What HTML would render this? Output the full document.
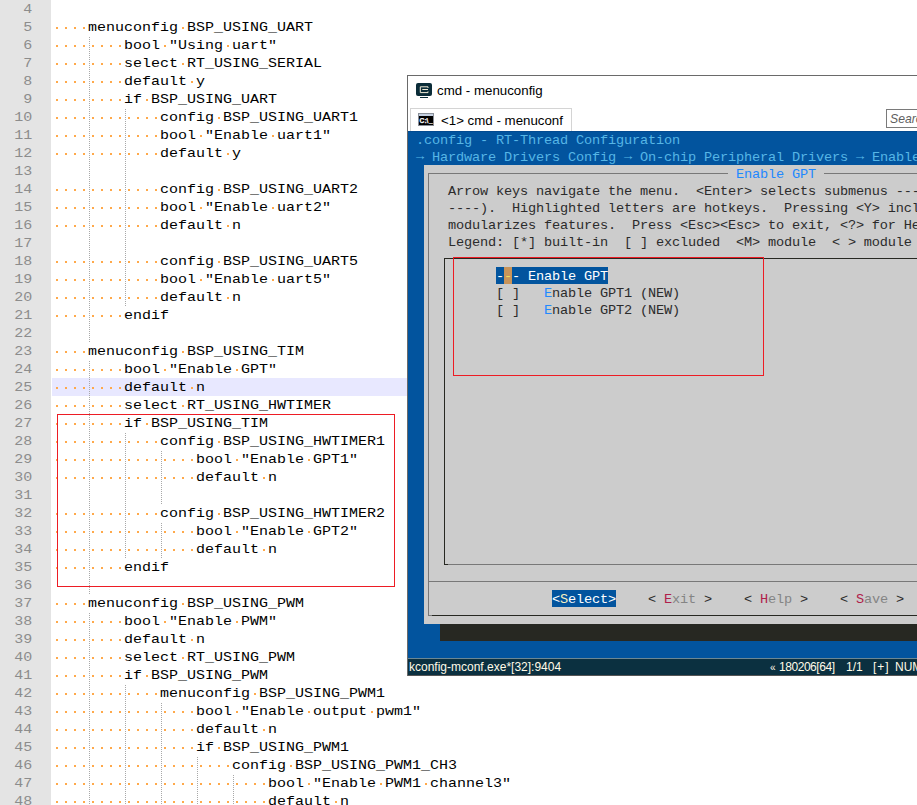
<!DOCTYPE html>
<html><head><meta charset="utf-8"><title>menuconfig</title>
<style>
html,body{margin:0;padding:0;background:#fff;overflow:hidden}
body{width:917px;height:805px;position:relative;overflow:hidden;font-family:"Liberation Sans",sans-serif}
#ed{position:absolute;left:0;top:0;width:917px;height:805px;overflow:hidden;background:#fff}
.gut{position:absolute;left:0;top:0;width:51px;height:805px;background:#e4e4e4}
.cur{position:absolute;left:52px;width:865px;height:18px;background:#e8e8ff}
.ln{position:absolute;left:0;width:28px;height:18px;margin:1px 0 0 0;text-align:right;color:#8c8c8c;font:13px/18px "Liberation Mono",monospace;transform:scaleX(1.1537);transform-origin:0 0}
.c{position:absolute;left:52px;margin:1px 0 0 0;height:18px;font:13px/18px "Liberation Mono",monospace;transform:scaleX(1.1537);transform-origin:0 0;color:#000;white-space:pre}
.d{position:absolute;width:2px;height:2px;background:#ffa94a}
.g{position:absolute;width:1px;height:18px;background:repeating-linear-gradient(to bottom,transparent 0,transparent 1px,#a8a8a8 1px,#a8a8a8 2px)}
.red{position:absolute;border:1px solid #ed1c24;box-sizing:content-box}
#win{position:absolute;left:0;top:0;width:917px;height:805px;overflow:hidden}
.winbg{position:absolute;left:407px;top:75px;width:520px;height:601px;background:#fff;border-left:1px solid #6a6a6a;border-top:1px solid #6a6a6a;box-sizing:border-box}
.ticon{position:absolute;left:416px;top:83px}
.ttext{position:absolute;left:437px;top:82px;font:13.3px/17px "Liberation Sans",sans-serif;color:#000;white-space:nowrap}
.tab{position:absolute;left:410px;top:108px;width:162px;height:23px;background:#fff;border:1px solid #d4d4d4;border-bottom:none;box-sizing:border-box}
.tabicon{position:absolute;left:418px;top:113px}
.tabtext{position:absolute;left:441px;top:112px;font:13.3px/17px "Liberation Sans",sans-serif;color:#000;white-space:nowrap}
.search{position:absolute;left:886px;top:109px;width:60px;height:19px;border:1px solid #7a7a7a;box-sizing:border-box;background:#fff}
.search span{position:absolute;left:3px;top:2px;font:italic 12.2px/15px "Liberation Sans",sans-serif;color:#606060}
.term{position:absolute;left:408px;top:131px;width:520px;height:527px;background:#02549e;border-top:1px solid #024a90;box-sizing:border-box}
.dlg{position:absolute;left:424px;top:165px;width:520px;height:459px;background:#cccccc}
.shadow{position:absolute;left:440px;top:624px;width:520px;height:17px;background:#272822}
.fr{position:absolute;box-sizing:border-box}
.outer{left:428px;top:173px;width:520px;height:443px;border-left:1px solid #787878;border-top:1px solid #787878;border-bottom:1px solid #787878}
.outerb{left:432px;top:615px;width:520px;height:1px;background:#272822}
.sep{left:428px;top:581px;width:520px;height:1px;background:#787878}
.inner{left:444px;top:258px;width:520px;height:307px;border-left:1px solid #272822;border-top:1px solid #272822;border-bottom:1px solid #272822}
.innerb{left:448px;top:564px;width:520px;height:1px;background:#787878}
.titlegap{position:absolute;left:728px;top:170px;width:96px;height:8px;background:#cccccc}
.t{position:absolute;margin:1px 0 0 0;height:17px;font:13.6px/17px "Liberation Mono",monospace;white-space:pre;letter-spacing:-0.16px}
.cy{color:#56b6e6}
.ttl{color:#1e88ff}
.ar{position:relative;top:-1px}
.dk{color:#2b2b2b}
.wh{color:#fff}
.hk{color:#2288ff}
.cc{color:#f0e060}
.sk{color:#f5f0c0}
.rk{color:#b0204a}
.gy{color:#848484}
.hl{position:absolute;height:17px;background:#02549e}
.cursor{position:absolute;width:8px;height:17px;background:#c8945a}
.status{position:absolute;left:408px;top:658px;width:520px;height:18px;background:#0b3040;border-top:1px solid #6a8794;border-bottom:1px solid #555;box-sizing:border-box;color:#fffbe8;font:12px/15px "Liberation Sans",sans-serif}
.status span{position:absolute;top:1px;white-space:nowrap}
</style></head>
<body>
<div id="ed">
<div class="gut"></div>
<div class="cur" style="top:378px"></div>
<div class="ln" style="top:0px">4</div>
<div class="ln" style="top:18px">5</div>
<i class="d" style="left:56px;top:27px"></i>
<i class="d" style="left:65px;top:27px"></i>
<i class="d" style="left:74px;top:27px"></i>
<i class="d" style="left:83px;top:27px"></i>
<i class="d" style="left:182px;top:27px"></i>
<pre class="c" style="top:18px">    menuconfig BSP_USING_UART</pre>
<div class="ln" style="top:36px">6</div>
<i class="d" style="left:56px;top:45px"></i>
<i class="d" style="left:65px;top:45px"></i>
<i class="d" style="left:74px;top:45px"></i>
<i class="d" style="left:83px;top:45px"></i>
<i class="d" style="left:92px;top:45px"></i>
<i class="d" style="left:101px;top:45px"></i>
<i class="d" style="left:110px;top:45px"></i>
<i class="d" style="left:119px;top:45px"></i>
<i class="d" style="left:164px;top:45px"></i>
<i class="d" style="left:227px;top:45px"></i>
<i class="g" style="left:89px;top:36px"></i>
<pre class="c" style="top:36px">        bool "Using uart"</pre>
<div class="ln" style="top:54px">7</div>
<i class="d" style="left:56px;top:63px"></i>
<i class="d" style="left:65px;top:63px"></i>
<i class="d" style="left:74px;top:63px"></i>
<i class="d" style="left:83px;top:63px"></i>
<i class="d" style="left:92px;top:63px"></i>
<i class="d" style="left:101px;top:63px"></i>
<i class="d" style="left:110px;top:63px"></i>
<i class="d" style="left:119px;top:63px"></i>
<i class="d" style="left:182px;top:63px"></i>
<i class="g" style="left:89px;top:54px"></i>
<pre class="c" style="top:54px">        select RT_USING_SERIAL</pre>
<div class="ln" style="top:72px">8</div>
<i class="d" style="left:56px;top:81px"></i>
<i class="d" style="left:65px;top:81px"></i>
<i class="d" style="left:74px;top:81px"></i>
<i class="d" style="left:83px;top:81px"></i>
<i class="d" style="left:92px;top:81px"></i>
<i class="d" style="left:101px;top:81px"></i>
<i class="d" style="left:110px;top:81px"></i>
<i class="d" style="left:119px;top:81px"></i>
<i class="d" style="left:191px;top:81px"></i>
<i class="g" style="left:89px;top:72px"></i>
<pre class="c" style="top:72px">        default y</pre>
<div class="ln" style="top:90px">9</div>
<i class="d" style="left:56px;top:99px"></i>
<i class="d" style="left:65px;top:99px"></i>
<i class="d" style="left:74px;top:99px"></i>
<i class="d" style="left:83px;top:99px"></i>
<i class="d" style="left:92px;top:99px"></i>
<i class="d" style="left:101px;top:99px"></i>
<i class="d" style="left:110px;top:99px"></i>
<i class="d" style="left:119px;top:99px"></i>
<i class="d" style="left:146px;top:99px"></i>
<i class="g" style="left:89px;top:90px"></i>
<pre class="c" style="top:90px">        if BSP_USING_UART</pre>
<div class="ln" style="top:108px">10</div>
<i class="d" style="left:56px;top:117px"></i>
<i class="d" style="left:65px;top:117px"></i>
<i class="d" style="left:74px;top:117px"></i>
<i class="d" style="left:83px;top:117px"></i>
<i class="d" style="left:92px;top:117px"></i>
<i class="d" style="left:101px;top:117px"></i>
<i class="d" style="left:110px;top:117px"></i>
<i class="d" style="left:119px;top:117px"></i>
<i class="d" style="left:128px;top:117px"></i>
<i class="d" style="left:137px;top:117px"></i>
<i class="d" style="left:146px;top:117px"></i>
<i class="d" style="left:155px;top:117px"></i>
<i class="d" style="left:218px;top:117px"></i>
<i class="g" style="left:89px;top:108px"></i>
<i class="g" style="left:125px;top:108px"></i>
<pre class="c" style="top:108px">            config BSP_USING_UART1</pre>
<div class="ln" style="top:126px">11</div>
<i class="d" style="left:56px;top:135px"></i>
<i class="d" style="left:65px;top:135px"></i>
<i class="d" style="left:74px;top:135px"></i>
<i class="d" style="left:83px;top:135px"></i>
<i class="d" style="left:92px;top:135px"></i>
<i class="d" style="left:101px;top:135px"></i>
<i class="d" style="left:110px;top:135px"></i>
<i class="d" style="left:119px;top:135px"></i>
<i class="d" style="left:128px;top:135px"></i>
<i class="d" style="left:137px;top:135px"></i>
<i class="d" style="left:146px;top:135px"></i>
<i class="d" style="left:155px;top:135px"></i>
<i class="d" style="left:200px;top:135px"></i>
<i class="d" style="left:272px;top:135px"></i>
<i class="g" style="left:89px;top:126px"></i>
<i class="g" style="left:125px;top:126px"></i>
<pre class="c" style="top:126px">            bool "Enable uart1"</pre>
<div class="ln" style="top:144px">12</div>
<i class="d" style="left:56px;top:153px"></i>
<i class="d" style="left:65px;top:153px"></i>
<i class="d" style="left:74px;top:153px"></i>
<i class="d" style="left:83px;top:153px"></i>
<i class="d" style="left:92px;top:153px"></i>
<i class="d" style="left:101px;top:153px"></i>
<i class="d" style="left:110px;top:153px"></i>
<i class="d" style="left:119px;top:153px"></i>
<i class="d" style="left:128px;top:153px"></i>
<i class="d" style="left:137px;top:153px"></i>
<i class="d" style="left:146px;top:153px"></i>
<i class="d" style="left:155px;top:153px"></i>
<i class="d" style="left:227px;top:153px"></i>
<i class="g" style="left:89px;top:144px"></i>
<i class="g" style="left:125px;top:144px"></i>
<pre class="c" style="top:144px">            default y</pre>
<div class="ln" style="top:162px">13</div>
<i class="g" style="left:89px;top:162px"></i>
<i class="g" style="left:125px;top:162px"></i>
<div class="ln" style="top:180px">14</div>
<i class="d" style="left:56px;top:189px"></i>
<i class="d" style="left:65px;top:189px"></i>
<i class="d" style="left:74px;top:189px"></i>
<i class="d" style="left:83px;top:189px"></i>
<i class="d" style="left:92px;top:189px"></i>
<i class="d" style="left:101px;top:189px"></i>
<i class="d" style="left:110px;top:189px"></i>
<i class="d" style="left:119px;top:189px"></i>
<i class="d" style="left:128px;top:189px"></i>
<i class="d" style="left:137px;top:189px"></i>
<i class="d" style="left:146px;top:189px"></i>
<i class="d" style="left:155px;top:189px"></i>
<i class="d" style="left:218px;top:189px"></i>
<i class="g" style="left:89px;top:180px"></i>
<i class="g" style="left:125px;top:180px"></i>
<pre class="c" style="top:180px">            config BSP_USING_UART2</pre>
<div class="ln" style="top:198px">15</div>
<i class="d" style="left:56px;top:207px"></i>
<i class="d" style="left:65px;top:207px"></i>
<i class="d" style="left:74px;top:207px"></i>
<i class="d" style="left:83px;top:207px"></i>
<i class="d" style="left:92px;top:207px"></i>
<i class="d" style="left:101px;top:207px"></i>
<i class="d" style="left:110px;top:207px"></i>
<i class="d" style="left:119px;top:207px"></i>
<i class="d" style="left:128px;top:207px"></i>
<i class="d" style="left:137px;top:207px"></i>
<i class="d" style="left:146px;top:207px"></i>
<i class="d" style="left:155px;top:207px"></i>
<i class="d" style="left:200px;top:207px"></i>
<i class="d" style="left:272px;top:207px"></i>
<i class="g" style="left:89px;top:198px"></i>
<i class="g" style="left:125px;top:198px"></i>
<pre class="c" style="top:198px">            bool "Enable uart2"</pre>
<div class="ln" style="top:216px">16</div>
<i class="d" style="left:56px;top:225px"></i>
<i class="d" style="left:65px;top:225px"></i>
<i class="d" style="left:74px;top:225px"></i>
<i class="d" style="left:83px;top:225px"></i>
<i class="d" style="left:92px;top:225px"></i>
<i class="d" style="left:101px;top:225px"></i>
<i class="d" style="left:110px;top:225px"></i>
<i class="d" style="left:119px;top:225px"></i>
<i class="d" style="left:128px;top:225px"></i>
<i class="d" style="left:137px;top:225px"></i>
<i class="d" style="left:146px;top:225px"></i>
<i class="d" style="left:155px;top:225px"></i>
<i class="d" style="left:227px;top:225px"></i>
<i class="g" style="left:89px;top:216px"></i>
<i class="g" style="left:125px;top:216px"></i>
<pre class="c" style="top:216px">            default n</pre>
<div class="ln" style="top:234px">17</div>
<i class="g" style="left:89px;top:234px"></i>
<i class="g" style="left:125px;top:234px"></i>
<div class="ln" style="top:252px">18</div>
<i class="d" style="left:56px;top:261px"></i>
<i class="d" style="left:65px;top:261px"></i>
<i class="d" style="left:74px;top:261px"></i>
<i class="d" style="left:83px;top:261px"></i>
<i class="d" style="left:92px;top:261px"></i>
<i class="d" style="left:101px;top:261px"></i>
<i class="d" style="left:110px;top:261px"></i>
<i class="d" style="left:119px;top:261px"></i>
<i class="d" style="left:128px;top:261px"></i>
<i class="d" style="left:137px;top:261px"></i>
<i class="d" style="left:146px;top:261px"></i>
<i class="d" style="left:155px;top:261px"></i>
<i class="d" style="left:218px;top:261px"></i>
<i class="g" style="left:89px;top:252px"></i>
<i class="g" style="left:125px;top:252px"></i>
<pre class="c" style="top:252px">            config BSP_USING_UART5</pre>
<div class="ln" style="top:270px">19</div>
<i class="d" style="left:56px;top:279px"></i>
<i class="d" style="left:65px;top:279px"></i>
<i class="d" style="left:74px;top:279px"></i>
<i class="d" style="left:83px;top:279px"></i>
<i class="d" style="left:92px;top:279px"></i>
<i class="d" style="left:101px;top:279px"></i>
<i class="d" style="left:110px;top:279px"></i>
<i class="d" style="left:119px;top:279px"></i>
<i class="d" style="left:128px;top:279px"></i>
<i class="d" style="left:137px;top:279px"></i>
<i class="d" style="left:146px;top:279px"></i>
<i class="d" style="left:155px;top:279px"></i>
<i class="d" style="left:200px;top:279px"></i>
<i class="d" style="left:272px;top:279px"></i>
<i class="g" style="left:89px;top:270px"></i>
<i class="g" style="left:125px;top:270px"></i>
<pre class="c" style="top:270px">            bool "Enable uart5"</pre>
<div class="ln" style="top:288px">20</div>
<i class="d" style="left:56px;top:297px"></i>
<i class="d" style="left:65px;top:297px"></i>
<i class="d" style="left:74px;top:297px"></i>
<i class="d" style="left:83px;top:297px"></i>
<i class="d" style="left:92px;top:297px"></i>
<i class="d" style="left:101px;top:297px"></i>
<i class="d" style="left:110px;top:297px"></i>
<i class="d" style="left:119px;top:297px"></i>
<i class="d" style="left:128px;top:297px"></i>
<i class="d" style="left:137px;top:297px"></i>
<i class="d" style="left:146px;top:297px"></i>
<i class="d" style="left:155px;top:297px"></i>
<i class="d" style="left:227px;top:297px"></i>
<i class="g" style="left:89px;top:288px"></i>
<i class="g" style="left:125px;top:288px"></i>
<pre class="c" style="top:288px">            default n</pre>
<div class="ln" style="top:306px">21</div>
<i class="d" style="left:56px;top:315px"></i>
<i class="d" style="left:65px;top:315px"></i>
<i class="d" style="left:74px;top:315px"></i>
<i class="d" style="left:83px;top:315px"></i>
<i class="d" style="left:92px;top:315px"></i>
<i class="d" style="left:101px;top:315px"></i>
<i class="d" style="left:110px;top:315px"></i>
<i class="d" style="left:119px;top:315px"></i>
<i class="g" style="left:89px;top:306px"></i>
<pre class="c" style="top:306px">        endif</pre>
<div class="ln" style="top:324px">22</div>
<i class="g" style="left:89px;top:324px"></i>
<div class="ln" style="top:342px">23</div>
<i class="d" style="left:56px;top:351px"></i>
<i class="d" style="left:65px;top:351px"></i>
<i class="d" style="left:74px;top:351px"></i>
<i class="d" style="left:83px;top:351px"></i>
<i class="d" style="left:182px;top:351px"></i>
<pre class="c" style="top:342px">    menuconfig BSP_USING_TIM</pre>
<div class="ln" style="top:360px">24</div>
<i class="d" style="left:56px;top:369px"></i>
<i class="d" style="left:65px;top:369px"></i>
<i class="d" style="left:74px;top:369px"></i>
<i class="d" style="left:83px;top:369px"></i>
<i class="d" style="left:92px;top:369px"></i>
<i class="d" style="left:101px;top:369px"></i>
<i class="d" style="left:110px;top:369px"></i>
<i class="d" style="left:119px;top:369px"></i>
<i class="d" style="left:164px;top:369px"></i>
<i class="d" style="left:236px;top:369px"></i>
<i class="g" style="left:89px;top:360px"></i>
<pre class="c" style="top:360px">        bool "Enable GPT"</pre>
<div class="ln" style="top:378px">25</div>
<i class="d" style="left:56px;top:387px"></i>
<i class="d" style="left:65px;top:387px"></i>
<i class="d" style="left:74px;top:387px"></i>
<i class="d" style="left:83px;top:387px"></i>
<i class="d" style="left:92px;top:387px"></i>
<i class="d" style="left:101px;top:387px"></i>
<i class="d" style="left:110px;top:387px"></i>
<i class="d" style="left:119px;top:387px"></i>
<i class="d" style="left:191px;top:387px"></i>
<i class="g" style="left:89px;top:378px"></i>
<pre class="c" style="top:378px">        default n</pre>
<div class="ln" style="top:396px">26</div>
<i class="d" style="left:56px;top:405px"></i>
<i class="d" style="left:65px;top:405px"></i>
<i class="d" style="left:74px;top:405px"></i>
<i class="d" style="left:83px;top:405px"></i>
<i class="d" style="left:92px;top:405px"></i>
<i class="d" style="left:101px;top:405px"></i>
<i class="d" style="left:110px;top:405px"></i>
<i class="d" style="left:119px;top:405px"></i>
<i class="d" style="left:182px;top:405px"></i>
<i class="g" style="left:89px;top:396px"></i>
<pre class="c" style="top:396px">        select RT_USING_HWTIMER</pre>
<div class="ln" style="top:414px">27</div>
<i class="d" style="left:56px;top:423px"></i>
<i class="d" style="left:65px;top:423px"></i>
<i class="d" style="left:74px;top:423px"></i>
<i class="d" style="left:83px;top:423px"></i>
<i class="d" style="left:92px;top:423px"></i>
<i class="d" style="left:101px;top:423px"></i>
<i class="d" style="left:110px;top:423px"></i>
<i class="d" style="left:119px;top:423px"></i>
<i class="d" style="left:146px;top:423px"></i>
<i class="g" style="left:89px;top:414px"></i>
<pre class="c" style="top:414px">        if BSP_USING_TIM</pre>
<div class="ln" style="top:432px">28</div>
<i class="d" style="left:56px;top:441px"></i>
<i class="d" style="left:65px;top:441px"></i>
<i class="d" style="left:74px;top:441px"></i>
<i class="d" style="left:83px;top:441px"></i>
<i class="d" style="left:92px;top:441px"></i>
<i class="d" style="left:101px;top:441px"></i>
<i class="d" style="left:110px;top:441px"></i>
<i class="d" style="left:119px;top:441px"></i>
<i class="d" style="left:128px;top:441px"></i>
<i class="d" style="left:137px;top:441px"></i>
<i class="d" style="left:146px;top:441px"></i>
<i class="d" style="left:155px;top:441px"></i>
<i class="d" style="left:218px;top:441px"></i>
<i class="g" style="left:89px;top:432px"></i>
<i class="g" style="left:125px;top:432px"></i>
<pre class="c" style="top:432px">            config BSP_USING_HWTIMER1</pre>
<div class="ln" style="top:450px">29</div>
<i class="d" style="left:56px;top:459px"></i>
<i class="d" style="left:65px;top:459px"></i>
<i class="d" style="left:74px;top:459px"></i>
<i class="d" style="left:83px;top:459px"></i>
<i class="d" style="left:92px;top:459px"></i>
<i class="d" style="left:101px;top:459px"></i>
<i class="d" style="left:110px;top:459px"></i>
<i class="d" style="left:119px;top:459px"></i>
<i class="d" style="left:128px;top:459px"></i>
<i class="d" style="left:137px;top:459px"></i>
<i class="d" style="left:146px;top:459px"></i>
<i class="d" style="left:155px;top:459px"></i>
<i class="d" style="left:164px;top:459px"></i>
<i class="d" style="left:173px;top:459px"></i>
<i class="d" style="left:182px;top:459px"></i>
<i class="d" style="left:191px;top:459px"></i>
<i class="d" style="left:236px;top:459px"></i>
<i class="d" style="left:308px;top:459px"></i>
<i class="g" style="left:89px;top:450px"></i>
<i class="g" style="left:125px;top:450px"></i>
<i class="g" style="left:161px;top:450px"></i>
<pre class="c" style="top:450px">                bool "Enable GPT1"</pre>
<div class="ln" style="top:468px">30</div>
<i class="d" style="left:56px;top:477px"></i>
<i class="d" style="left:65px;top:477px"></i>
<i class="d" style="left:74px;top:477px"></i>
<i class="d" style="left:83px;top:477px"></i>
<i class="d" style="left:92px;top:477px"></i>
<i class="d" style="left:101px;top:477px"></i>
<i class="d" style="left:110px;top:477px"></i>
<i class="d" style="left:119px;top:477px"></i>
<i class="d" style="left:128px;top:477px"></i>
<i class="d" style="left:137px;top:477px"></i>
<i class="d" style="left:146px;top:477px"></i>
<i class="d" style="left:155px;top:477px"></i>
<i class="d" style="left:164px;top:477px"></i>
<i class="d" style="left:173px;top:477px"></i>
<i class="d" style="left:182px;top:477px"></i>
<i class="d" style="left:191px;top:477px"></i>
<i class="d" style="left:263px;top:477px"></i>
<i class="g" style="left:89px;top:468px"></i>
<i class="g" style="left:125px;top:468px"></i>
<i class="g" style="left:161px;top:468px"></i>
<pre class="c" style="top:468px">                default n</pre>
<div class="ln" style="top:486px">31</div>
<i class="g" style="left:89px;top:486px"></i>
<i class="g" style="left:125px;top:486px"></i>
<i class="g" style="left:161px;top:486px"></i>
<div class="ln" style="top:504px">32</div>
<i class="d" style="left:56px;top:513px"></i>
<i class="d" style="left:65px;top:513px"></i>
<i class="d" style="left:74px;top:513px"></i>
<i class="d" style="left:83px;top:513px"></i>
<i class="d" style="left:92px;top:513px"></i>
<i class="d" style="left:101px;top:513px"></i>
<i class="d" style="left:110px;top:513px"></i>
<i class="d" style="left:119px;top:513px"></i>
<i class="d" style="left:128px;top:513px"></i>
<i class="d" style="left:137px;top:513px"></i>
<i class="d" style="left:146px;top:513px"></i>
<i class="d" style="left:155px;top:513px"></i>
<i class="d" style="left:218px;top:513px"></i>
<i class="g" style="left:89px;top:504px"></i>
<i class="g" style="left:125px;top:504px"></i>
<pre class="c" style="top:504px">            config BSP_USING_HWTIMER2</pre>
<div class="ln" style="top:522px">33</div>
<i class="d" style="left:56px;top:531px"></i>
<i class="d" style="left:65px;top:531px"></i>
<i class="d" style="left:74px;top:531px"></i>
<i class="d" style="left:83px;top:531px"></i>
<i class="d" style="left:92px;top:531px"></i>
<i class="d" style="left:101px;top:531px"></i>
<i class="d" style="left:110px;top:531px"></i>
<i class="d" style="left:119px;top:531px"></i>
<i class="d" style="left:128px;top:531px"></i>
<i class="d" style="left:137px;top:531px"></i>
<i class="d" style="left:146px;top:531px"></i>
<i class="d" style="left:155px;top:531px"></i>
<i class="d" style="left:164px;top:531px"></i>
<i class="d" style="left:173px;top:531px"></i>
<i class="d" style="left:182px;top:531px"></i>
<i class="d" style="left:191px;top:531px"></i>
<i class="d" style="left:236px;top:531px"></i>
<i class="d" style="left:308px;top:531px"></i>
<i class="g" style="left:89px;top:522px"></i>
<i class="g" style="left:125px;top:522px"></i>
<i class="g" style="left:161px;top:522px"></i>
<pre class="c" style="top:522px">                bool "Enable GPT2"</pre>
<div class="ln" style="top:540px">34</div>
<i class="d" style="left:56px;top:549px"></i>
<i class="d" style="left:65px;top:549px"></i>
<i class="d" style="left:74px;top:549px"></i>
<i class="d" style="left:83px;top:549px"></i>
<i class="d" style="left:92px;top:549px"></i>
<i class="d" style="left:101px;top:549px"></i>
<i class="d" style="left:110px;top:549px"></i>
<i class="d" style="left:119px;top:549px"></i>
<i class="d" style="left:128px;top:549px"></i>
<i class="d" style="left:137px;top:549px"></i>
<i class="d" style="left:146px;top:549px"></i>
<i class="d" style="left:155px;top:549px"></i>
<i class="d" style="left:164px;top:549px"></i>
<i class="d" style="left:173px;top:549px"></i>
<i class="d" style="left:182px;top:549px"></i>
<i class="d" style="left:191px;top:549px"></i>
<i class="d" style="left:263px;top:549px"></i>
<i class="g" style="left:89px;top:540px"></i>
<i class="g" style="left:125px;top:540px"></i>
<i class="g" style="left:161px;top:540px"></i>
<pre class="c" style="top:540px">                default n</pre>
<div class="ln" style="top:558px">35</div>
<i class="d" style="left:56px;top:567px"></i>
<i class="d" style="left:65px;top:567px"></i>
<i class="d" style="left:74px;top:567px"></i>
<i class="d" style="left:83px;top:567px"></i>
<i class="d" style="left:92px;top:567px"></i>
<i class="d" style="left:101px;top:567px"></i>
<i class="d" style="left:110px;top:567px"></i>
<i class="d" style="left:119px;top:567px"></i>
<i class="g" style="left:89px;top:558px"></i>
<pre class="c" style="top:558px">        endif</pre>
<div class="ln" style="top:576px">36</div>
<i class="g" style="left:89px;top:576px"></i>
<div class="ln" style="top:594px">37</div>
<i class="d" style="left:56px;top:603px"></i>
<i class="d" style="left:65px;top:603px"></i>
<i class="d" style="left:74px;top:603px"></i>
<i class="d" style="left:83px;top:603px"></i>
<i class="d" style="left:182px;top:603px"></i>
<pre class="c" style="top:594px">    menuconfig BSP_USING_PWM</pre>
<div class="ln" style="top:612px">38</div>
<i class="d" style="left:56px;top:621px"></i>
<i class="d" style="left:65px;top:621px"></i>
<i class="d" style="left:74px;top:621px"></i>
<i class="d" style="left:83px;top:621px"></i>
<i class="d" style="left:92px;top:621px"></i>
<i class="d" style="left:101px;top:621px"></i>
<i class="d" style="left:110px;top:621px"></i>
<i class="d" style="left:119px;top:621px"></i>
<i class="d" style="left:164px;top:621px"></i>
<i class="d" style="left:236px;top:621px"></i>
<i class="g" style="left:89px;top:612px"></i>
<pre class="c" style="top:612px">        bool "Enable PWM"</pre>
<div class="ln" style="top:630px">39</div>
<i class="d" style="left:56px;top:639px"></i>
<i class="d" style="left:65px;top:639px"></i>
<i class="d" style="left:74px;top:639px"></i>
<i class="d" style="left:83px;top:639px"></i>
<i class="d" style="left:92px;top:639px"></i>
<i class="d" style="left:101px;top:639px"></i>
<i class="d" style="left:110px;top:639px"></i>
<i class="d" style="left:119px;top:639px"></i>
<i class="d" style="left:191px;top:639px"></i>
<i class="g" style="left:89px;top:630px"></i>
<pre class="c" style="top:630px">        default n</pre>
<div class="ln" style="top:648px">40</div>
<i class="d" style="left:56px;top:657px"></i>
<i class="d" style="left:65px;top:657px"></i>
<i class="d" style="left:74px;top:657px"></i>
<i class="d" style="left:83px;top:657px"></i>
<i class="d" style="left:92px;top:657px"></i>
<i class="d" style="left:101px;top:657px"></i>
<i class="d" style="left:110px;top:657px"></i>
<i class="d" style="left:119px;top:657px"></i>
<i class="d" style="left:182px;top:657px"></i>
<i class="g" style="left:89px;top:648px"></i>
<pre class="c" style="top:648px">        select RT_USING_PWM</pre>
<div class="ln" style="top:666px">41</div>
<i class="d" style="left:56px;top:675px"></i>
<i class="d" style="left:65px;top:675px"></i>
<i class="d" style="left:74px;top:675px"></i>
<i class="d" style="left:83px;top:675px"></i>
<i class="d" style="left:92px;top:675px"></i>
<i class="d" style="left:101px;top:675px"></i>
<i class="d" style="left:110px;top:675px"></i>
<i class="d" style="left:119px;top:675px"></i>
<i class="d" style="left:146px;top:675px"></i>
<i class="g" style="left:89px;top:666px"></i>
<pre class="c" style="top:666px">        if BSP_USING_PWM</pre>
<div class="ln" style="top:684px">42</div>
<i class="d" style="left:56px;top:693px"></i>
<i class="d" style="left:65px;top:693px"></i>
<i class="d" style="left:74px;top:693px"></i>
<i class="d" style="left:83px;top:693px"></i>
<i class="d" style="left:92px;top:693px"></i>
<i class="d" style="left:101px;top:693px"></i>
<i class="d" style="left:110px;top:693px"></i>
<i class="d" style="left:119px;top:693px"></i>
<i class="d" style="left:128px;top:693px"></i>
<i class="d" style="left:137px;top:693px"></i>
<i class="d" style="left:146px;top:693px"></i>
<i class="d" style="left:155px;top:693px"></i>
<i class="d" style="left:254px;top:693px"></i>
<i class="g" style="left:89px;top:684px"></i>
<i class="g" style="left:125px;top:684px"></i>
<pre class="c" style="top:684px">            menuconfig BSP_USING_PWM1</pre>
<div class="ln" style="top:702px">43</div>
<i class="d" style="left:56px;top:711px"></i>
<i class="d" style="left:65px;top:711px"></i>
<i class="d" style="left:74px;top:711px"></i>
<i class="d" style="left:83px;top:711px"></i>
<i class="d" style="left:92px;top:711px"></i>
<i class="d" style="left:101px;top:711px"></i>
<i class="d" style="left:110px;top:711px"></i>
<i class="d" style="left:119px;top:711px"></i>
<i class="d" style="left:128px;top:711px"></i>
<i class="d" style="left:137px;top:711px"></i>
<i class="d" style="left:146px;top:711px"></i>
<i class="d" style="left:155px;top:711px"></i>
<i class="d" style="left:164px;top:711px"></i>
<i class="d" style="left:173px;top:711px"></i>
<i class="d" style="left:182px;top:711px"></i>
<i class="d" style="left:191px;top:711px"></i>
<i class="d" style="left:236px;top:711px"></i>
<i class="d" style="left:308px;top:711px"></i>
<i class="d" style="left:371px;top:711px"></i>
<i class="g" style="left:89px;top:702px"></i>
<i class="g" style="left:125px;top:702px"></i>
<i class="g" style="left:161px;top:702px"></i>
<pre class="c" style="top:702px">                bool "Enable output pwm1"</pre>
<div class="ln" style="top:720px">44</div>
<i class="d" style="left:56px;top:729px"></i>
<i class="d" style="left:65px;top:729px"></i>
<i class="d" style="left:74px;top:729px"></i>
<i class="d" style="left:83px;top:729px"></i>
<i class="d" style="left:92px;top:729px"></i>
<i class="d" style="left:101px;top:729px"></i>
<i class="d" style="left:110px;top:729px"></i>
<i class="d" style="left:119px;top:729px"></i>
<i class="d" style="left:128px;top:729px"></i>
<i class="d" style="left:137px;top:729px"></i>
<i class="d" style="left:146px;top:729px"></i>
<i class="d" style="left:155px;top:729px"></i>
<i class="d" style="left:164px;top:729px"></i>
<i class="d" style="left:173px;top:729px"></i>
<i class="d" style="left:182px;top:729px"></i>
<i class="d" style="left:191px;top:729px"></i>
<i class="d" style="left:263px;top:729px"></i>
<i class="g" style="left:89px;top:720px"></i>
<i class="g" style="left:125px;top:720px"></i>
<i class="g" style="left:161px;top:720px"></i>
<pre class="c" style="top:720px">                default n</pre>
<div class="ln" style="top:738px">45</div>
<i class="d" style="left:56px;top:747px"></i>
<i class="d" style="left:65px;top:747px"></i>
<i class="d" style="left:74px;top:747px"></i>
<i class="d" style="left:83px;top:747px"></i>
<i class="d" style="left:92px;top:747px"></i>
<i class="d" style="left:101px;top:747px"></i>
<i class="d" style="left:110px;top:747px"></i>
<i class="d" style="left:119px;top:747px"></i>
<i class="d" style="left:128px;top:747px"></i>
<i class="d" style="left:137px;top:747px"></i>
<i class="d" style="left:146px;top:747px"></i>
<i class="d" style="left:155px;top:747px"></i>
<i class="d" style="left:164px;top:747px"></i>
<i class="d" style="left:173px;top:747px"></i>
<i class="d" style="left:182px;top:747px"></i>
<i class="d" style="left:191px;top:747px"></i>
<i class="d" style="left:218px;top:747px"></i>
<i class="g" style="left:89px;top:738px"></i>
<i class="g" style="left:125px;top:738px"></i>
<i class="g" style="left:161px;top:738px"></i>
<pre class="c" style="top:738px">                if BSP_USING_PWM1</pre>
<div class="ln" style="top:756px">46</div>
<i class="d" style="left:56px;top:765px"></i>
<i class="d" style="left:65px;top:765px"></i>
<i class="d" style="left:74px;top:765px"></i>
<i class="d" style="left:83px;top:765px"></i>
<i class="d" style="left:92px;top:765px"></i>
<i class="d" style="left:101px;top:765px"></i>
<i class="d" style="left:110px;top:765px"></i>
<i class="d" style="left:119px;top:765px"></i>
<i class="d" style="left:128px;top:765px"></i>
<i class="d" style="left:137px;top:765px"></i>
<i class="d" style="left:146px;top:765px"></i>
<i class="d" style="left:155px;top:765px"></i>
<i class="d" style="left:164px;top:765px"></i>
<i class="d" style="left:173px;top:765px"></i>
<i class="d" style="left:182px;top:765px"></i>
<i class="d" style="left:191px;top:765px"></i>
<i class="d" style="left:200px;top:765px"></i>
<i class="d" style="left:209px;top:765px"></i>
<i class="d" style="left:218px;top:765px"></i>
<i class="d" style="left:227px;top:765px"></i>
<i class="d" style="left:290px;top:765px"></i>
<i class="g" style="left:89px;top:756px"></i>
<i class="g" style="left:125px;top:756px"></i>
<i class="g" style="left:161px;top:756px"></i>
<i class="g" style="left:197px;top:756px"></i>
<pre class="c" style="top:756px">                    config BSP_USING_PWM1_CH3</pre>
<div class="ln" style="top:774px">47</div>
<i class="d" style="left:56px;top:783px"></i>
<i class="d" style="left:65px;top:783px"></i>
<i class="d" style="left:74px;top:783px"></i>
<i class="d" style="left:83px;top:783px"></i>
<i class="d" style="left:92px;top:783px"></i>
<i class="d" style="left:101px;top:783px"></i>
<i class="d" style="left:110px;top:783px"></i>
<i class="d" style="left:119px;top:783px"></i>
<i class="d" style="left:128px;top:783px"></i>
<i class="d" style="left:137px;top:783px"></i>
<i class="d" style="left:146px;top:783px"></i>
<i class="d" style="left:155px;top:783px"></i>
<i class="d" style="left:164px;top:783px"></i>
<i class="d" style="left:173px;top:783px"></i>
<i class="d" style="left:182px;top:783px"></i>
<i class="d" style="left:191px;top:783px"></i>
<i class="d" style="left:200px;top:783px"></i>
<i class="d" style="left:209px;top:783px"></i>
<i class="d" style="left:218px;top:783px"></i>
<i class="d" style="left:227px;top:783px"></i>
<i class="d" style="left:236px;top:783px"></i>
<i class="d" style="left:245px;top:783px"></i>
<i class="d" style="left:254px;top:783px"></i>
<i class="d" style="left:263px;top:783px"></i>
<i class="d" style="left:308px;top:783px"></i>
<i class="d" style="left:380px;top:783px"></i>
<i class="d" style="left:425px;top:783px"></i>
<i class="g" style="left:89px;top:774px"></i>
<i class="g" style="left:125px;top:774px"></i>
<i class="g" style="left:161px;top:774px"></i>
<i class="g" style="left:197px;top:774px"></i>
<i class="g" style="left:233px;top:774px"></i>
<pre class="c" style="top:774px">                        bool "Enable PWM1 channel3"</pre>
<div class="ln" style="top:792px">48</div>
<i class="d" style="left:56px;top:801px"></i>
<i class="d" style="left:65px;top:801px"></i>
<i class="d" style="left:74px;top:801px"></i>
<i class="d" style="left:83px;top:801px"></i>
<i class="d" style="left:92px;top:801px"></i>
<i class="d" style="left:101px;top:801px"></i>
<i class="d" style="left:110px;top:801px"></i>
<i class="d" style="left:119px;top:801px"></i>
<i class="d" style="left:128px;top:801px"></i>
<i class="d" style="left:137px;top:801px"></i>
<i class="d" style="left:146px;top:801px"></i>
<i class="d" style="left:155px;top:801px"></i>
<i class="d" style="left:164px;top:801px"></i>
<i class="d" style="left:173px;top:801px"></i>
<i class="d" style="left:182px;top:801px"></i>
<i class="d" style="left:191px;top:801px"></i>
<i class="d" style="left:200px;top:801px"></i>
<i class="d" style="left:209px;top:801px"></i>
<i class="d" style="left:218px;top:801px"></i>
<i class="d" style="left:227px;top:801px"></i>
<i class="d" style="left:236px;top:801px"></i>
<i class="d" style="left:245px;top:801px"></i>
<i class="d" style="left:254px;top:801px"></i>
<i class="d" style="left:263px;top:801px"></i>
<i class="d" style="left:335px;top:801px"></i>
<i class="g" style="left:89px;top:792px"></i>
<i class="g" style="left:125px;top:792px"></i>
<i class="g" style="left:161px;top:792px"></i>
<i class="g" style="left:197px;top:792px"></i>
<i class="g" style="left:233px;top:792px"></i>
<pre class="c" style="top:792px">                        default n</pre>
<div class="red" style="left:57px;top:414px;width:336px;height:171px"></div>
</div>
<div id="win">
<div class="winbg"></div>
<svg class="ticon" width="16" height="16" viewBox="0 0 16 16"><rect x="0" y="0" width="16" height="13" rx="2" fill="#0b2c38"/><path d="M12 5v-1.2h-7.7v5.8h7.7v-1.2 M6.3 6.5h5.7" fill="none" stroke="#f2ecd8" stroke-width="1"/><rect x="4" y="14" width="8" height="1" fill="#0b2c38"/></svg><span class="ttext">cmd - menuconfig</span>
<div class="tab"></div>
<svg class="tabicon" width="16" height="13" viewBox="0 0 16 13"><rect x="0" y="0" width="16" height="13" fill="#8a8f98"/><rect x="1" y="1" width="14" height="2" fill="#c4cfe0"/><rect x="1" y="3" width="14" height="9" fill="#000"/><text x="1.6 6.4 8.6 11" y="10.2" font-family="Liberation Sans, sans-serif" font-size="6.6" font-weight="bold" fill="#fff" stroke="#fff" stroke-width="0.25">C:\_</text></svg><span class="tabtext">&lt;1&gt; cmd - menuconf</span>
<div class="search"><span>Search</span></div>
<div class="term"></div>
<div class="dlg"></div>
<div class="shadow"></div>
<div class="fr outer"></div>
<div class="fr sep"></div>
<div class="fr inner"></div>
<div class="fr outerb"></div>
<div class="fr innerb"></div>
<div class="titlegap"></div>
<pre class="t cy" style="left:416px;top:131px">.config - RT-Thread Configuration</pre>
<pre class="t cy" style="left:416px;top:148px"><span class="ar">→</span> Hardware Drivers Config <span class="ar">→</span> On-chip Peripheral Drivers <span class="ar">→</span> Enable GPT</pre>
<pre class="t ttl" style="left:736px;top:165px">Enable GPT</pre>
<pre class="t dk" style="left:448px;top:182px">Arrow keys navigate the menu.  &lt;Enter&gt; selects submenus ---&gt; (or empty</pre>
<pre class="t dk" style="left:448px;top:199px">----).  Highlighted letters are hotkeys.  Pressing &lt;Y&gt; includes, &lt;N&gt;</pre>
<pre class="t dk" style="left:448px;top:216px">modularizes features.  Press &lt;Esc&gt;&lt;Esc&gt; to exit, &lt;?&gt; for Help, &lt;/&gt; for</pre>
<pre class="t dk" style="left:448px;top:233px">Legend: [*] built-in  [ ] excluded  &lt;M&gt; module  &lt; &gt; module capable</pre>
<div class="hl" style="left:496px;top:267px;width:112px"></div>
<div class="cursor" style="left:504px;top:267px"></div>
<pre class="t wh" style="left:496px;top:267px">-<span class="cc">-</span>- Enable GPT</pre>
<pre class="t dk" style="left:496px;top:284px">[ ]   <span class="hk">E</span>nable GPT1 (NEW)</pre>
<pre class="t dk" style="left:496px;top:301px">[ ]   <span class="hk">E</span>nable GPT2 (NEW)</pre>
<div class="hl" style="left:552px;top:590px;width:64px"></div>
<pre class="t wh" style="left:552px;top:590px">&lt;<span class="sk">S</span>elect&gt;</pre>
<pre class="t dk" style="left:648px;top:590px">&lt; <span class="rk">E</span><span class="gy">xit</span> &gt;</pre>
<pre class="t dk" style="left:744px;top:590px">&lt; <span class="rk">H</span><span class="gy">elp</span> &gt;</pre>
<pre class="t dk" style="left:840px;top:590px">&lt; <span class="rk">S</span><span class="gy">ave</span> &gt;</pre>
<div class="red" style="left:453px;top:257px;width:309px;height:117px"></div>
<div class="status"><span style="left:1px">kconfig-mconf.exe*[32]:9404</span><span style="left:362px;font-size:10px">«</span><span style="left:371px;letter-spacing:-0.45px">180206[64]</span><span style="left:438px">1/1</span><span style="left:465px;letter-spacing:1px">[+]</span><span style="left:487px">NUM</span></div>
</div>
</body></html>
